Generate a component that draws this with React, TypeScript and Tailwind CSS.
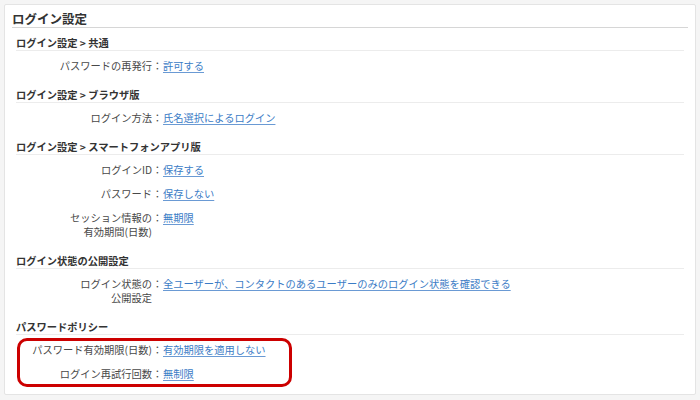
const font = {
  fontFamily: '"Noto Sans CJK JP", "Noto Sans", sans-serif',
};

type Row = {
  label: React.ReactNode;
  value: string;
};

type Section = {
  title: string;
  rows: Row[];
};

const sections: Section[] = [
  {
    title: "ログイン設定 > 共通",
    rows: [{ label: "パスワードの再発行", value: "許可する" }],
  },
  {
    title: "ログイン設定 > ブラウザ版",
    rows: [{ label: "ログイン方法", value: "氏名選択によるログイン" }],
  },
  {
    title: "ログイン設定 > スマートフォンアプリ版",
    rows: [
      { label: "ログインID", value: "保存する" },
      { label: "パスワード", value: "保存しない" },
      {
        label: (
          <>
            セッション情報の
            <br />
            有効期間(日数)
          </>
        ),
        value: "無期限",
      },
    ],
  },
  {
    title: "ログイン状態の公開設定",
    rows: [
      {
        label: (
          <>
            ログイン状態の
            <br />
            公開設定
          </>
        ),
        value: "全ユーザーが、コンタクトのあるユーザーのみのログイン状態を確認できる",
      },
    ],
  },
];

function SettingRow({ row, offset = 0 }: { row: Row; offset?: number }) {
  return (
    <div className="flex items-start">
      <div
        className="shrink-0 text-right text-[#484848]"
        style={{ width: 136 - offset }}
      >
        {row.label}
      </div>
      <div className="w-[11px] shrink-0 text-center text-[#484848]">：</div>
      <a
        href="#"
        className="text-[#3b7cc6] underline decoration-[#6a9ad4] underline-offset-2"
      >
        {row.value}
      </a>
    </div>
  );
}

function SectionHeader({ title }: { title: string }) {
  return (
    <h3 className="border-b border-[#ececec] text-[10.25px] leading-[15px] font-bold whitespace-pre text-[#333]">
      {title}
    </h3>
  );
}

export default function App() {
  return (
    <div
      className="h-[400px] w-[700px] bg-[#f5f5f5] px-[4px] pt-[4px]"
      style={font}
    >
      <div className="h-[391px] w-[692px] rounded-[2px] border border-[#e4e4e4] bg-white px-[7px] pt-[5px]">
        <h2 className="border-b border-[#d6d6d6] text-[12.5px] leading-[17px] font-bold text-[#333]">
          ログイン設定
        </h2>

        <div className="mt-[7px] flex flex-col px-[4px] text-[10.25px] leading-[14px]">
          {sections.map((section) => (
            <div key={section.title}>
              <SectionHeader title={section.title} />
              <div className="pt-[3px] pb-[9px]">
                {section.rows.map((row, i) => (
                  <div key={i} className="py-[5px]">
                    <SettingRow row={row} />
                  </div>
                ))}
              </div>
            </div>
          ))}

          <div>
            <SectionHeader title="パスワードポリシー" />
            <div className="mt-[3px] ml-[1px] flex w-[275px] flex-col gap-[10px] rounded-[10px] border-[3px] border-[#cc0000] pt-[2px] pb-[3px]">
              <SettingRow
                row={{ label: "パスワード有効期限(日数)", value: "有効期限を適用しない" }}
                offset={4}
              />
              <SettingRow
                row={{ label: "ログイン再試行回数", value: "無制限" }}
                offset={4}
              />
            </div>
          </div>
        </div>
      </div>
    </div>
  );
}
